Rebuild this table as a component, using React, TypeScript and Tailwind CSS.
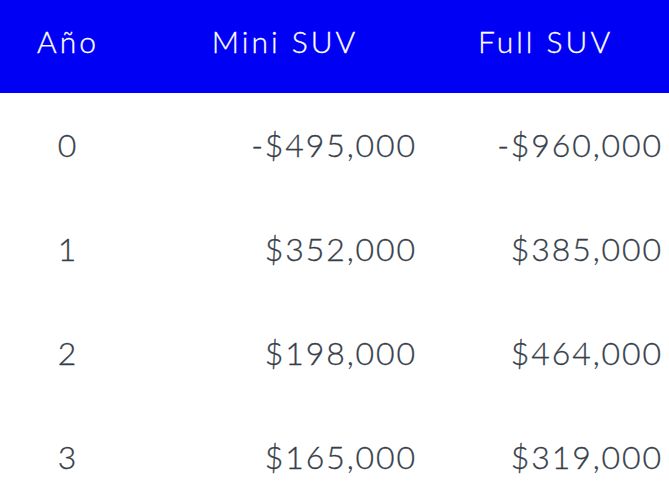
const rows = [
  { year: "0", mini: "-$495,000", full: "-$960,000" },
  { year: "1", mini: "$352,000", full: "$385,000" },
  { year: "2", mini: "$198,000", full: "$464,000" },
  { year: "3", mini: "$165,000", full: "$319,000" },
];

export default function App() {
  return (
    <div className="w-[669px] h-[503px] overflow-hidden bg-white font-['Lato',sans-serif] font-light">
      <div className="grid grid-cols-[136px_298px_235px] h-[93px] items-center pb-[10px] bg-[#0000f5] text-white text-[30px] tracking-[3px] [-webkit-text-stroke:0.3px_white]">
        <div className="text-center">Año</div>
        <div className="text-center">Mini SUV</div>
        <div className="text-center pr-[12px]">Full SUV</div>
      </div>
      {rows.map((r) => (
        <div
          key={r.year}
          className="grid grid-cols-[136px_298px_235px] h-[104px] items-center text-[#363e4a] text-[32px] tracking-[1.9px] [-webkit-text-stroke:0.3px_#363e4a]"
        >
          <div className="text-center">{r.year}</div>
          <div className="text-right pr-[17px]">{r.mini}</div>
          <div className="text-right pr-[6px]">{r.full}</div>
        </div>
      ))}
    </div>
  );
}
